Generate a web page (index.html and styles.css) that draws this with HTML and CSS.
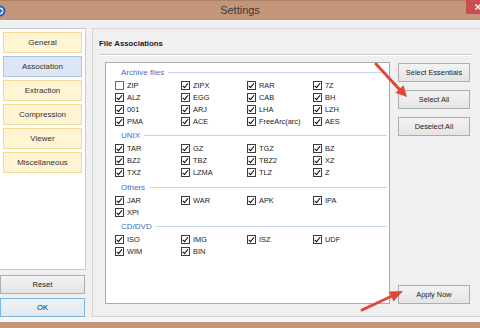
FILE: index.html
```html
<!DOCTYPE html>
<html>
<head>
<meta charset="utf-8">
<title>Settings</title>
<link rel="stylesheet" href="styles.css">
</head>
<body>
<div class="window">
  <div class="titlebar">
    <svg class="appicon" width="12" height="12" viewBox="0 0 12 12"><circle cx="6" cy="6" r="5.5" fill="#2b5fc9"/><circle cx="6" cy="6" r="3.4" fill="#e8effc"/><path d="M4 6h3.5M6 4.2l1.8 1.8L6 7.8" stroke="#2b5fc9" stroke-width="1.2" fill="none"/></svg>
    <span class="title">Settings</span>
    <div class="close"><svg width="6" height="6" viewBox="0 0 6 6"><path d="M0.5 0.5L5.5 5.5M5.5 0.5L0.5 5.5" stroke="#fff" stroke-width="1.3"/></svg></div>
  </div>
  <div class="content">
    <div class="sidebar">
      <div class="nav">
        <div class="navbtn">General</div>
        <div class="navbtn active">Association</div>
        <div class="navbtn">Extraction</div>
        <div class="navbtn">Compression</div>
        <div class="navbtn">Viewer</div>
        <div class="navbtn">Miscellaneous</div>
      </div>
      <div class="btn side reset">Reset</div>
      <div class="btn side ok">OK</div>
    </div>
    <div class="main">
      <div class="heading">File Associations</div>
      <div class="body">
        <div class="group">
          <div class="section">
            <div class="sectitle">Archive files</div>
            <div class="grid">
              <div class="cb"><i class="box"></i>ZIP</div>
              <div class="cb"><i class="box on"></i>ZIPX</div>
              <div class="cb"><i class="box on"></i>RAR</div>
              <div class="cb"><i class="box on"></i>7Z</div>
              <div class="cb"><i class="box on"></i>ALZ</div>
              <div class="cb"><i class="box on"></i>EGG</div>
              <div class="cb"><i class="box on"></i>CAB</div>
              <div class="cb"><i class="box on"></i>BH</div>
              <div class="cb"><i class="box on"></i>001</div>
              <div class="cb"><i class="box on"></i>ARJ</div>
              <div class="cb"><i class="box on"></i>LHA</div>
              <div class="cb"><i class="box on"></i>LZH</div>
              <div class="cb"><i class="box on"></i>PMA</div>
              <div class="cb"><i class="box on"></i>ACE</div>
              <div class="cb"><i class="box on"></i>FreeArc(arc)</div>
              <div class="cb"><i class="box on"></i>AES</div>
            </div>
          </div>
          <div class="section">
            <div class="sectitle">UNIX</div>
            <div class="grid">
              <div class="cb"><i class="box on"></i>TAR</div>
              <div class="cb"><i class="box on"></i>GZ</div>
              <div class="cb"><i class="box on"></i>TGZ</div>
              <div class="cb"><i class="box on"></i>BZ</div>
              <div class="cb"><i class="box on"></i>BZ2</div>
              <div class="cb"><i class="box on"></i>TBZ</div>
              <div class="cb"><i class="box on"></i>TBZ2</div>
              <div class="cb"><i class="box on"></i>XZ</div>
              <div class="cb"><i class="box on"></i>TXZ</div>
              <div class="cb"><i class="box on"></i>LZMA</div>
              <div class="cb"><i class="box on"></i>TLZ</div>
              <div class="cb"><i class="box on"></i>Z</div>
            </div>
          </div>
          <div class="section">
            <div class="sectitle">Others</div>
            <div class="grid">
              <div class="cb"><i class="box on"></i>JAR</div>
              <div class="cb"><i class="box on"></i>WAR</div>
              <div class="cb"><i class="box on"></i>APK</div>
              <div class="cb"><i class="box on"></i>IPA</div>
              <div class="cb"><i class="box on"></i>XPI</div>
            </div>
          </div>
          <div class="section">
            <div class="sectitle">CD/DVD</div>
            <div class="grid">
              <div class="cb"><i class="box on"></i>ISO</div>
              <div class="cb"><i class="box on"></i>IMG</div>
              <div class="cb"><i class="box on"></i>ISZ</div>
              <div class="cb"><i class="box on"></i>UDF</div>
              <div class="cb"><i class="box on"></i>WIM</div>
              <div class="cb"><i class="box on"></i>BIN</div>
            </div>
          </div>
        </div>
        <div class="actions">
          <div class="btn">Select Essentials</div>
          <div class="btn">Select All</div>
          <div class="btn">Deselect All</div>
          <div class="btn apply">Apply Now</div>
        </div>
      </div>
    </div>
  </div>
  <div class="footer-line"></div>
  <div class="footer"></div>
</div>
<svg class="arrows" width="480" height="328" viewBox="0 0 480 328">
  <line x1="376" y1="64" x2="400" y2="90" stroke="#e2463b" stroke-width="3" stroke-linecap="round"/>
  <polygon points="407,97 395.5,92.8 403.5,85.2" fill="#e2463b"/>
  <line x1="362" y1="310" x2="392" y2="296" stroke="#e2463b" stroke-width="3" stroke-linecap="round"/>
  <polygon points="403,291 393.5,301.5 388.9,291.5" fill="#e2463b"/>
</svg>
</body>
</html>
```

FILE: styles.css
```css
* { box-sizing: border-box; margin: 0; padding: 0; }
html, body { width: 480px; height: 328px; overflow: hidden; }
body {
  position: relative;
  font-family: "Liberation Sans", Arial, sans-serif;
  font-size: 7.5px;
  color: #222;
  background: #f0f0f0;
}
.window {
  width: 480px;
  height: 328px;
  display: flex;
  flex-direction: column;
  background: #f0f0f0;
  overflow: hidden;
}
.titlebar {
  flex: none;
  height: 21px;
  background: #c3967a;
  border-top: 1px solid #b08264;
  border-bottom: 1px solid #f6f6f6;
  display: grid;
  grid-template-columns: 1fr auto 1fr;
  align-items: start;
}
.appicon { justify-self: start; align-self: center; margin-left: -6px; }
.title {
  font-size: 11px;
  line-height: 19px;
  color: #3a3a3a;
}
.close {
  justify-self: end;
  margin-top: -1px;
  margin-right: -10px;
  width: 24px;
  height: 14px;
  background: #c7504f;
  display: flex;
  align-items: center;
  justify-content: center;
}
.close svg { display: block; }
.content {
  flex: none;
  height: 296px;
  padding-top: 7px;
  display: flex;
}
.sidebar {
  flex: none;
  width: 86px;
  display: flex;
  flex-direction: column;
}
.nav {
  flex: 1;
  background: #fff;
  border: 1px solid #cbcbcb;
  border-left: none;
  padding: 3px 0 0 3px;
  display: flex;
  flex-direction: column;
  gap: 3px;
}
.navbtn {
  width: 79px;
  height: 21px;
  border: 1px solid #f4d894;
  background: #fff4d4;
  text-align: center;
  line-height: 19px;
  font-size: 8px;
  color: #333;
}
.navbtn.active {
  background: #dde7f5;
  border-color: #adc3e4;
}
.btn {
  height: 19px;
  border: 1px solid #adadad;
  background: linear-gradient(#f3f3f3, #e4e4e4);
  text-align: center;
  line-height: 17px;
  font-size: 7.4px;
  color: #222;
}
.side { width: 85px; font-size: 7.6px; }
.reset { margin-top: 5px; }
.ok { margin-top: 4px; border-color: #7ab6ec; background: linear-gradient(#eef3f8, #e3e8ee); }
.main {
  flex: 1;
  margin-left: 6px;
  margin-right: -20px;
  border: 1px solid #d4d4d4;
  border-right: none;
  padding-left: 6px;
}
.heading {
  width: 374px;
  height: 26px;
  padding-top: 10px;
  line-height: 10px;
  font-weight: bold;
  font-size: 7.8px;
  color: #1a1a1a;
  border-bottom: 1px solid #cdcdcd;
  box-shadow: 0 1px 0 #fff;
}
.body {
  display: flex;
  margin-top: 7px;
  padding-left: 6px;
}
.group {
  flex: none;
  width: 285px;
  height: 242px;
  border: 1px solid #ababab;
  background: #fff;
  padding: 2px 2px 0 9px;
}
.section + .section { margin-top: 1.5px; }
.sectitle {
  height: 14px;
  display: flex;
  align-items: center;
  padding-left: 6px;
  font-size: 8px;
  color: #3f6dc7;
}
.sectitle::after {
  content: "";
  flex: 1;
  height: 1px;
  margin-left: 4px;
  background: #c7d5ef;
}
.grid {
  display: grid;
  grid-template-columns: repeat(4, 66px);
  grid-auto-rows: 12px;
}
.cb {
  display: flex;
  align-items: center;
  gap: 3px;
  font-size: 7.4px;
  color: #222;
}
.box {
  position: relative;
  flex: none;
  width: 9px;
  height: 9px;
  border: 1px solid #3c3c3c;
  background: #fff;
}
.box:not(.on) { border-color: #6a6a6a; }
.box.on::after {
  content: "";
  position: absolute;
  left: 2.2px;
  top: 0px;
  width: 2.2px;
  height: 4.6px;
  border: solid #000;
  border-width: 0 1.5px 1.5px 0;
  transform: rotate(40deg);
}
.actions {
  flex: none;
  width: 72px;
  margin-left: 8px;
  padding-top: 1px;
  display: flex;
  flex-direction: column;
  gap: 8px;
}
.apply { margin-top: auto; }
.footer-line {
  flex: none;
  height: 5px;
  background: #f7f7f7;
}
.footer {
  flex: 1;
  background: #c3967a;
}
.arrows {
  position: absolute;
  left: 0;
  top: 0;
  pointer-events: none;
}
```
